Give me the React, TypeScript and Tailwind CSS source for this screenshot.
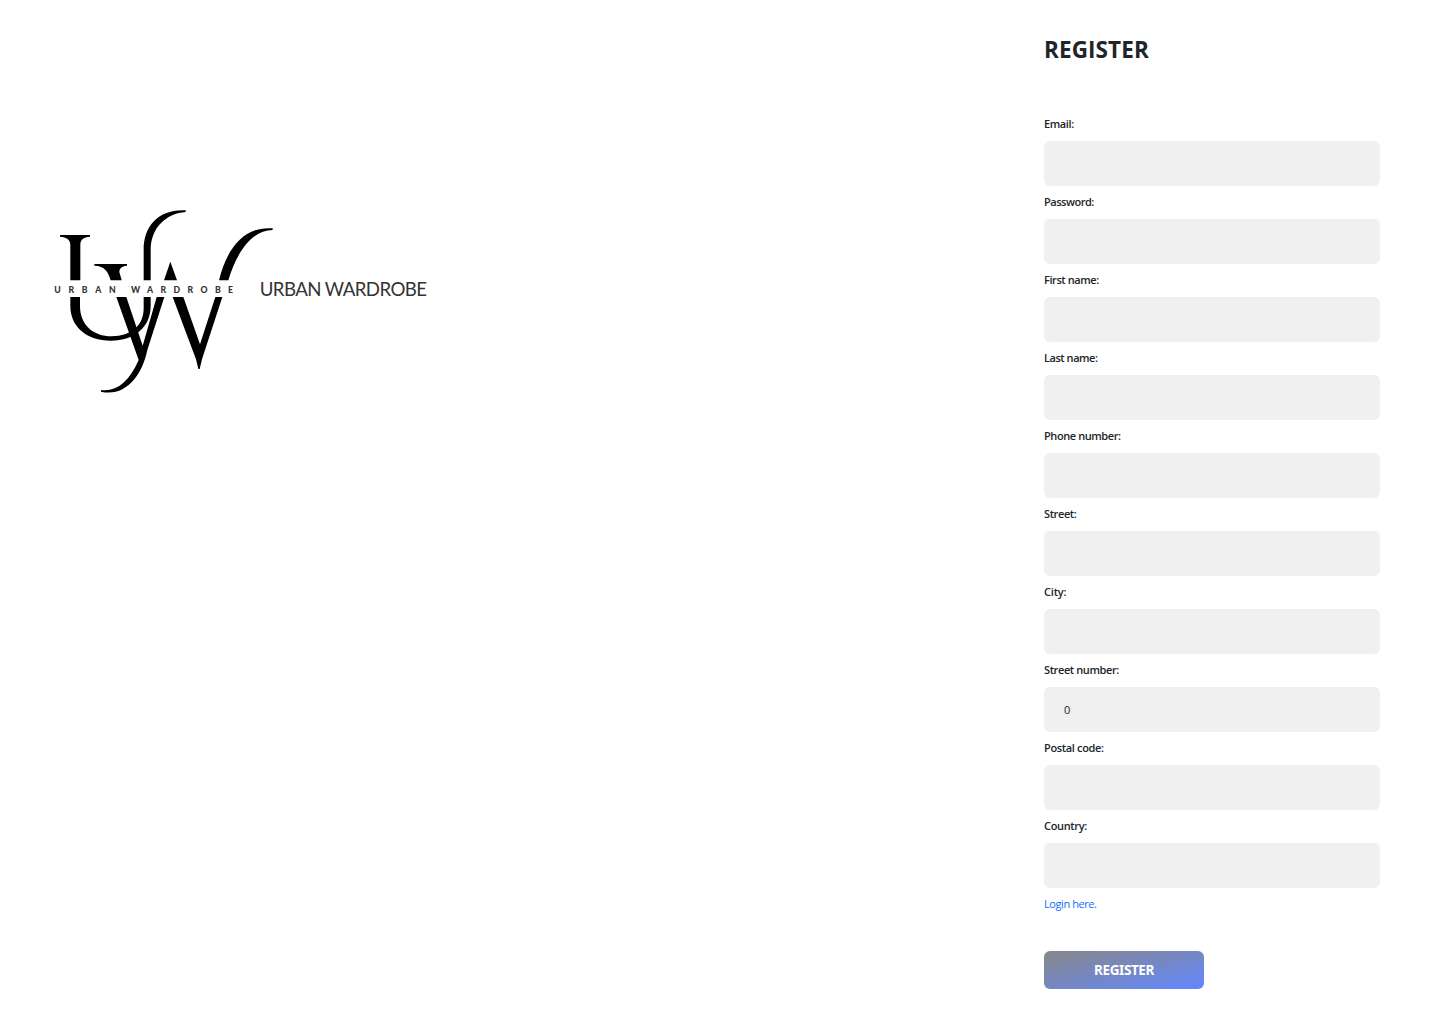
type Field = { label: string; type: string; tracking: string; value?: string };

const fields: Field[] = [
  { label: "Email:", type: "email", tracking: "tracking-[-0.4px]" },
  { label: "Password:", type: "password", tracking: "tracking-[-0.48px]" },
  { label: "First name:", type: "text", tracking: "tracking-[-0.42px]" },
  { label: "Last name:", type: "text", tracking: "tracking-[-0.46px]" },
  { label: "Phone number:", type: "text", tracking: "tracking-[-0.42px]" },
  { label: "Street:", type: "text", tracking: "tracking-[-0.4px]" },
  { label: "City:", type: "text", tracking: "tracking-[-0.2px]" },
  { label: "Street number:", type: "text", tracking: "tracking-[-0.4px]", value: "0" },
  { label: "Postal code:", type: "text", tracking: "tracking-[-0.34px]" },
  { label: "Country:", type: "text", tracking: "tracking-[-0.34px]" },
];

function Logo() {
  return (
    <svg viewBox="0 0 1200 600" className="h-[200px] w-[400px]" role="img" aria-label="Urban Wardrobe">
      <g fill="#000">
        <path d="M60 105H150V110C130 112 121 118 121 135V241H91V135C91 118 80 112 60 110Z" />
        <path d="M163 192H261V197C243 199 238 207 238 216L245 241H212C204 215 195 198 163 197Z" />
        <path d="M311 241V150C311 78 355 27 437 31V36C380 40 332 82 332 150V241Z" />
        <path d="M391 185L411 241H372Z" />
        <path d="M537 241C557 160 602 77 698 85V90C640 90 592 150 565 241Z" />
        <path d="M91 291H120V318C120 375 160 409 215 409C275 409 311 375 311 325V291H332V318C332 380 285 422 212 422C140 422 91 380 91 318Z" />
        <path d="M229 291H259L308 437L350 291H373L322 450C306 528 255 592 183 575V570C230 576 268 545 296 480Z" />
        <path d="M398 291H430L480 433L526 291H547L486 478L479 507H475L468 478Z" />
      </g>
      <text x="43" y="278" textLength="184" fill="#333" className="font-['Lato'] text-[26px] font-black">URBAN</text>
      <text x="273" y="278" textLength="306" fill="#333" className="font-['Lato'] text-[26px] font-black">WARDROBE</text>
      <text x="659" y="289" textLength="502" fill="#333" className="font-['Lato'] text-[56px]">URBAN WARDROBE</text>
    </svg>
  );
}

export default function App() {
  return (
    <main className="flex h-[1027px] justify-between bg-white pr-[65px] pl-10 font-['Noto_Sans',sans-serif] text-[#212529]">
      <div className="pt-[200px]">
        <Logo />
      </div>
      <form className="flex w-[336px] flex-col items-start pt-[34px]">
        <h1 className="h-[82px] font-['Open_Sans',sans-serif] text-[22.5px] leading-[32px] font-bold tracking-[0.1px]">REGISTER</h1>
        {fields.map((f) => (
          <div key={f.label} className="mb-2 flex w-full flex-col gap-[9px]">
            <label className={`h-4 font-['Open_Sans',sans-serif] text-[11px] leading-4 font-semibold ${f.tracking}`}>
              {f.label}
            </label>
            <input
              type={f.type}
              aria-label={f.label}
              defaultValue={f.value}
              className="h-[45px] w-full rounded-md bg-[#f0f0f0] px-5 font-['Open_Sans',sans-serif] text-[11px] tracking-[-0.4px] outline-none"
            />
          </div>
        ))}
        <a href="#" className="h-4 font-['Open_Sans',sans-serif] text-[11px] leading-4 tracking-[-0.42px] text-[#0d6efd]">
          Login here.
        </a>
        <button
          type="button"
          className="mt-[39px] h-[38px] w-40 rounded-md bg-[linear-gradient(to_bottom_right,#888888,#6287ff)] pt-px text-[13.5px] font-bold tracking-[-0.4px] text-white"
        >
          REGISTER
        </button>
      </form>
    </main>
  );
}
